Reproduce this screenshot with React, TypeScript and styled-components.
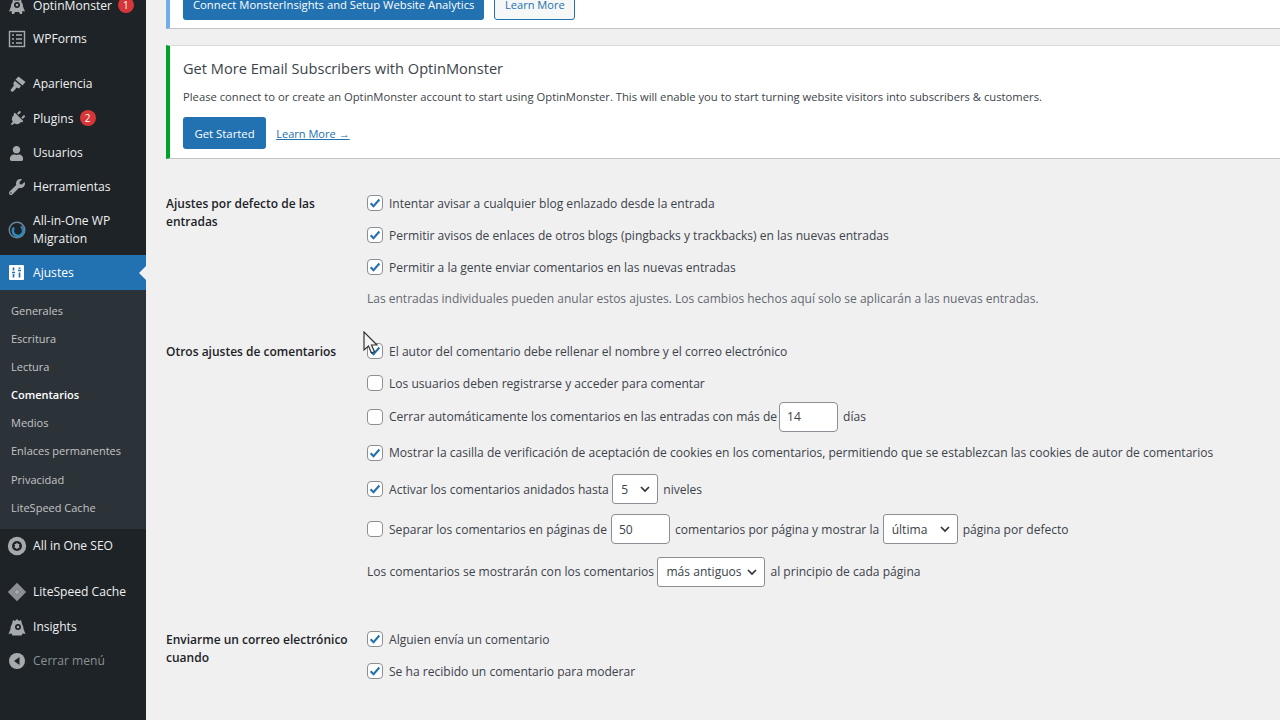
import React from "react";
import styled, { createGlobalStyle } from "styled-components";
import { FaPlug, FaUser, FaWrench } from "react-icons/fa";

const GlobalStyle = createGlobalStyle`
    html, body {
        margin: 0;
        padding: 0;
        height: 720px;
        overflow: hidden;
        background: #f0f0f1;
        font-family: "Open Sans", "Noto Sans", sans-serif;
        font-size: 12.07px;
        color: #3c434a;
    }
`;

const MonsterIcon = () => (
    <svg width="20" height="20" viewBox="0 0 20 20" fill="#a7aaad">
        <path d="M6 3l1.500 1.500h5L14 3l.6 3.500c1 1 1.400 2.400 1.400 4l2 5-2.500-.5-.5 3h-2l-1-2H8l-1 2H5l-.5-3-2.500.5 2-5c0-1.600.4-3 1.400-4z" />
        <circle cx="10" cy="9" r="3" fill="#1d2327" />
        <circle cx="10" cy="9" r="1.300" />
    </svg>
);

const FormsIcon = () => (
    <svg width="18" height="18" viewBox="0 0 18 18" fill="none" stroke="#a7aaad" strokeWidth="1.400">
        <rect x="1.500" y="1.500" width="15" height="15" />
        <path d="M4 5h2M8 5h6M4 9h2M8 9h6M4 13h2M8 13h6" />
    </svg>
);

const BrushIcon = () => (
    <svg width="18" height="18" viewBox="0 0 18 18" fill="#a7aaad">
        <path d="M10.500 1.500l7 5.500-3 3.500-7-6z" />
        <path d="M6.800 5.800l6.200 5.200-2 2.500-2.200-1-3 3.600c-1 1-3.300.6-3.300-1l3.600-4.800-1-1.500z" />
    </svg>
);

const MigrationIcon = () => (
    <svg width="20" height="20" viewBox="0 0 20 20" fill="none">
        <circle cx="10" cy="10" r="7.800" stroke="#6d8796" strokeWidth="1.400" />
        <path d="M14 6.500a5.200 5.200 0 1 1-7 1" stroke="#2f86b8" strokeWidth="2.600" />
    </svg>
);

const SettingsIcon = () => (
    <svg width="15" height="15" viewBox="0 0 15 15">
        <rect width="15" height="15" rx="1" fill="#fff" />
        <path d="M4.500 2.500v3M4.500 9v3.500M3 7.500h3M10.500 2.500V4M10.500 7.500v5M9 5.500h3" stroke="#2271b1" strokeWidth="1.700" />
    </svg>
);

const SeoIcon = () => (
    <svg width="20" height="20" viewBox="0 0 20 20">
        <circle cx="10" cy="10" r="9.200" fill="#a7aaad" />
        <circle cx="10" cy="10" r="5" fill="#1d2327" />
        <path d="M10 6.500l1 1.500h1.500l-.5 2 .5 2H11l-1 1.500L9 12H7.500l.5-2-.5-2H9z" fill="#a7aaad" />
    </svg>
);

const DiamondIcon = () => (
    <svg width="20" height="20" viewBox="0 0 20 20">
        <path d="M10 .8L19.200 10 10 19.200.8 10z" fill="#8c8f94" />
        <path d="M10 7l3 3-3 3-3-3z" fill="#a7aaad" stroke="#6b6f74" strokeWidth=".6" />
    </svg>
);

const InsightsIcon = () => (
    <svg width="20" height="20" viewBox="0 0 20 20" fill="#a7aaad">
        <path d="M6 3l2 1 2-2 2 2 2-1 1 4c1 1.500 1.500 3.500 1.500 5l2 5-3-.5-1 2H5.500l-1-2-3 .5 2-5c0-2 .5-3.500 1.500-5z" />
        <circle cx="11" cy="10" r="3" fill="#1d2327" />
        <circle cx="11" cy="10" r="1.300" />
    </svg>
);

const CollapseIcon = () => (
    <svg width="16" height="16" viewBox="0 0 16 16">
        <circle cx="8" cy="8" r="8" fill="#a7aaad" />
        <path d="M10.500 4v8L5 8z" fill="#1d2327" />
    </svg>
);

const CheckMark = () => (
    <svg width="14" height="14" viewBox="0 0 16 16" fill="none">
        <path d="M3 8.300l3.300 3.300L13 4" stroke="#2271b1" strokeWidth="2.400" />
    </svg>
);

const Chevron = () => (
    <svg width="12" height="12" viewBox="0 0 12 12" fill="none">
        <path d="M2 4l4 4 4-4" stroke="#2c3338" strokeWidth="1.700" />
    </svg>
);

const TiltedPlug = styled(FaPlug)`
    transform: rotate(45deg);
`;

const sideTop = [
    { label: "OptinMonster", icon: <MonsterIcon />, badge: "1", h: 33 },
    { label: "WPForms", icon: <FormsIcon />, h: 34, gap: 10 },
    { label: "Apariencia", icon: <BrushIcon />, h: 35, gap: 1 },
    { label: "Plugins", icon: <TiltedPlug size={16} />, badge: "2", h: 34 },
    { label: "Usuarios", icon: <FaUser size={15} />, h: 34 },
    { label: "Herramientas", icon: <FaWrench size={16} />, h: 34 },
    { label: "All-in-One WP Migration", icon: <MigrationIcon />, h: 51 },
];

const subItems = [
    "Generales",
    "Escritura",
    "Lectura",
    "Comentarios",
    "Medios",
    "Enlaces permanentes",
    "Privacidad",
    "LiteSpeed Cache",
];

const Check: React.FC<{ on?: boolean }> = ({ on }) => (
    <CheckBox>{on && <CheckMark />}</CheckBox>
);

const Dropdown: React.FC<{ value: string; width: number }> = ({ value, width }) => (
    <Select $width={width}>
        <span>{value}</span>
        <Chevron />
    </Select>
);

export default function App() {
    return (
        <Page>
            <GlobalStyle />
            <Sidebar>
                {sideTop.map(item => (
                    <MenuItem key={item.label} $height={item.h} $gap={item.gap}>
                        <MenuIcon>{item.icon}</MenuIcon>
                        <MenuLabel>
                            {item.label}
                            {item.badge && <Badge>{item.badge}</Badge>}
                        </MenuLabel>
                    </MenuItem>
                ))}
                <ActiveItem>
                    <MenuIcon>
                        <SettingsIcon />
                    </MenuIcon>
                    <MenuLabel>Ajustes</MenuLabel>
                </ActiveItem>
                <SubMenu>
                    {subItems.map(label => (
                        <SubItem key={label} $current={label === "Comentarios"}>
                            {label}
                        </SubItem>
                    ))}
                </SubMenu>
                <MenuItem $height={34} $gap={11}>
                    <MenuIcon>
                        <SeoIcon />
                    </MenuIcon>
                    <MenuLabel>All in One SEO</MenuLabel>
                </MenuItem>
                <MenuItem $height={35} $gap={1}>
                    <MenuIcon>
                        <DiamondIcon />
                    </MenuIcon>
                    <MenuLabel>LiteSpeed Cache</MenuLabel>
                </MenuItem>
                <MenuItem $height={34}>
                    <MenuIcon>
                        <InsightsIcon />
                    </MenuIcon>
                    <MenuLabel>Insights</MenuLabel>
                </MenuItem>
                <MenuItem $height={34}>
                    <MenuIcon>
                        <CollapseIcon />
                    </MenuIcon>
                    <CollapseLabel>Cerrar menú</CollapseLabel>
                </MenuItem>
            </Sidebar>

            <Main>
                <TopNotice>
                    <ConnectButton>Connect MonsterInsights and Setup Website Analytics</ConnectButton>
                    <SecondaryButton>Learn More</SecondaryButton>
                </TopNotice>

                <Notice>
                    <NoticeTitle>Get More Email Subscribers with OptinMonster</NoticeTitle>
                    <NoticeText>
                        Please connect to or create an OptinMonster account to start using OptinMonster. This will
                        enable you to start turning website visitors into subscribers &amp; customers.
                    </NoticeText>
                    <NoticeActions>
                        <PrimaryButton>Get Started</PrimaryButton>
                        <TextLink>Learn More →</TextLink>
                    </NoticeActions>
                </Notice>

                <FormSection $top={28}>
                    <FormLabel>Ajustes por defecto de las entradas</FormLabel>
                    <Fields>
                        <Row $height={32}>
                            <Check on />
                            Intentar avisar a cualquier blog enlazado desde la entrada
                        </Row>
                        <Row $height={32}>
                            <Check on />
                            Permitir avisos de enlaces de otros blogs (pingbacks y trackbacks) en las nuevas entradas
                        </Row>
                        <Row $height={32}>
                            <Check on />
                            Permitir a la gente enviar comentarios en las nuevas entradas
                        </Row>
                        <Row $height={31}>
                            <Description>
                                Las entradas individuales pueden anular estos ajustes. Los cambios hechos aquí solo se
                                aplicarán a las nuevas entradas.
                            </Description>
                        </Row>
                    </Fields>
                </FormSection>

                <FormSection $top={21}>
                    <FormLabel>Otros ajustes de comentarios</FormLabel>
                    <Fields>
                        <Row $height={32}>
                            <Check on />
                            El autor del comentario debe rellenar el nombre y el correo electrónico
                        </Row>
                        <Row $height={32}>
                            <Check />
                            Los usuarios deben registrarse y acceder para comentar
                        </Row>
                        <Row $height={35}>
                            <Check />
                            Cerrar automáticamente los comentarios en las entradas con más de
                            <NumberInput $width={59} $left={2}>
                                14
                            </NumberInput>
                            días
                        </Row>
                        <Row $height={37}>
                            <Check on />
                            Mostrar la casilla de verificación de aceptación de cookies en los comentarios, permitiendo
                            que se establezcan las cookies de autor de comentarios
                        </Row>
                        <Row $height={36}>
                            <Check on />
                            Activar los comentarios anidados hasta
                            <Dropdown value="5" width={46} />
                            niveles
                        </Row>
                        <Row $height={44}>
                            <Check />
                            Separar los comentarios en páginas de
                            <NumberInput $width={59} $left={4}>
                                50
                            </NumberInput>
                            comentarios por página y mostrar la
                            <Dropdown value="última" width={75} />
                            página por defecto
                        </Row>
                        <Row $height={41}>
                            Los comentarios se mostrarán con los comentarios
                            <Dropdown value="más antiguos" width={108} />
                            al principio de cada página
                        </Row>
                    </Fields>
                </FormSection>

                <FormSection $top={31}>
                    <FormLabel>Enviarme un correo electrónico cuando</FormLabel>
                    <Fields>
                        <Row $height={32}>
                            <Check on />
                            Alguien envía un comentario
                        </Row>
                        <Row $height={32}>
                            <Check on />
                            Se ha recibido un comentario para moderar
                        </Row>
                    </Fields>
                </FormSection>
            </Main>

            <Cursor width="16" height="24" viewBox="0 0 16 24">
                <path d="M1 1v18l4.500-4 3 7 3-1.300-3-6.700H14z" fill="#f4f4f4" stroke="#333" strokeWidth="1.200" />
            </Cursor>
        </Page>
    );
}

const Page = styled.div`
    position: relative;
    display: flex;
    width: 1280px;
    height: 720px;
    overflow: hidden;
    background: #f0f0f1;
`;

const Sidebar = styled.nav`
    flex: 0 0 146px;
    margin-top: -11px;
    height: 731px;
    background: #1d2327;
    color: #f0f0f1;
`;

const MenuItem = styled.div<{ $height: number; $gap?: number }>`
    display: flex;
    align-items: center;
    height: ${props => props.$height}px;
    margin-bottom: ${props => props.$gap || 0}px;
    font-size: 12.1px;
`;

const ActiveItem = styled.div`
    position: relative;
    display: flex;
    align-items: center;
    height: 35px;
    background: #2271b1;
    color: #fff;
    font-size: 12.1px;

    &::after {
        content: "";
        position: absolute;
        right: 0;
        top: 11px;
        border: 7px solid transparent;
        border-right-color: #f0f0f1;
    }
`;

const MenuIcon = styled.span`
    display: flex;
    flex: 0 0 33px;
    justify-content: center;
    color: #a7aaad;
`;

const MenuLabel = styled.span`
    line-height: 18px;
    width: 110px;
`;

const CollapseLabel = styled(MenuLabel)`
    color: #8c8f94;
`;

const Badge = styled.span`
    display: inline-block;
    width: 16px;
    height: 16px;
    margin-left: 6px;
    border-radius: 50%;
    background: #d63638;
    color: #fff;
    font-size: 10px;
    line-height: 16px;
    text-align: center;
    vertical-align: 1px;
`;

const SubMenu = styled.div`
    box-sizing: border-box;
    height: 239px;
    padding-top: 7px;
    background: #2c3338;
`;

const SubItem = styled.div<{ $current?: boolean }>`
    height: 28.1px;
    padding-left: 11px;
    font-size: 11px;
    line-height: 28px;
    color: ${props => (props.$current ? "#fff" : "#c3c4c7")};
    font-weight: ${props => (props.$current ? 600 : 400)};
`;

const Main = styled.main`
    flex: 1;
    min-width: 0;
    padding-left: 20px;
`;

const TopNotice = styled.div`
    display: flex;
    align-items: flex-end;
    gap: 10px;
    height: 29px;
    box-sizing: border-box;
    padding: 0 0 8px 13px;
    background: #fff;
    border-left: 4px solid #72aee6;
    border-bottom: 1px solid #c3c4c7;
`;

const Notice = styled.div`
    height: 114px;
    margin-top: 16px;
    box-sizing: border-box;
    padding: 11px 0 0 13px;
    background: #fff;
    border-left: 4px solid #00a32a;
    border-top: 1px solid #dcdcde;
    border-bottom: 1px solid #c3c4c7;
`;

const NoticeTitle = styled.h2`
    margin: 0;
    font-size: 14.6px;
    font-weight: 400;
    line-height: 22px;
    color: #3c434a;
`;

const NoticeText = styled.p`
    margin: 9px 0 0;
    font-size: 11.24px;
    line-height: 18px;
`;

const NoticeActions = styled.div`
    display: flex;
    align-items: center;
    gap: 10px;
    margin-top: 11px;
`;

const PrimaryButton = styled.span`
    display: inline-flex;
    align-items: center;
    height: 32px;
    padding: 0 11.5px;
    background: #2271b1;
    border-radius: 3px;
    color: #fff;
    font-size: 11.35px;
`;

const ConnectButton = styled(PrimaryButton)`
    padding: 0 10px;
    font-size: 11.25px;
`;

const SecondaryButton = styled.span`
    display: inline-flex;
    align-items: center;
    height: 32px;
    padding: 0 9.5px;
    background: #f6f7f7;
    border: 1px solid #2271b1;
    border-radius: 3px;
    box-sizing: border-box;
    color: #2271b1;
    font-size: 11.1px;
`;

const TextLink = styled.span`
    color: #2271b1;
    font-size: 11.05px;
    text-decoration: underline;
`;

const FormSection = styled.section<{ $top: number }>`
    display: flex;
    margin-top: ${props => props.$top}px;
`;

const FormLabel = styled.div`
    flex: 0 0 201px;
    box-sizing: border-box;
    padding: 8px 10px 0 0;
    font-weight: 600;
    font-size: 12px;
    line-height: 18px;
    color: #1d2327;
`;

const Fields = styled.div`
    flex: 1;
    min-width: 0;
`;

const Row = styled.div<{ $height: number }>`
    display: flex;
    align-items: center;
    height: ${props => props.$height}px;
    white-space: nowrap;
`;

const Description = styled.span`
    font-size: 12px;
    color: #646970;
`;

const CheckBox = styled.span`
    display: inline-flex;
    align-items: center;
    justify-content: center;
    box-sizing: border-box;
    flex: 0 0 16px;
    width: 16px;
    height: 16px;
    margin-right: 6px;
    background: #fff;
    border: 1px solid #8c8f94;
    border-radius: 4px;
`;

const NumberInput = styled.span<{ $width: number; $left: number }>`
    display: inline-flex;
    align-items: center;
    box-sizing: border-box;
    width: ${props => props.$width}px;
    height: 30px;
    margin: 0 5px 0 ${props => props.$left}px;
    padding-left: 7px;
    background: #fff;
    border: 1px solid #8c8f94;
    border-radius: 4px;
`;

const Select = styled.span<{ $width: number }>`
    display: inline-flex;
    align-items: center;
    justify-content: space-between;
    box-sizing: border-box;
    width: ${props => props.$width}px;
    height: 30px;
    margin: 0 5px 0 3.5px;
    padding: 0 6px 0 8px;
    background: #fff;
    border: 1px solid #8c8f94;
    border-radius: 3px;
`;

const Cursor = styled.svg`
    position: absolute;
    left: 363px;
    top: 331px;
`;
